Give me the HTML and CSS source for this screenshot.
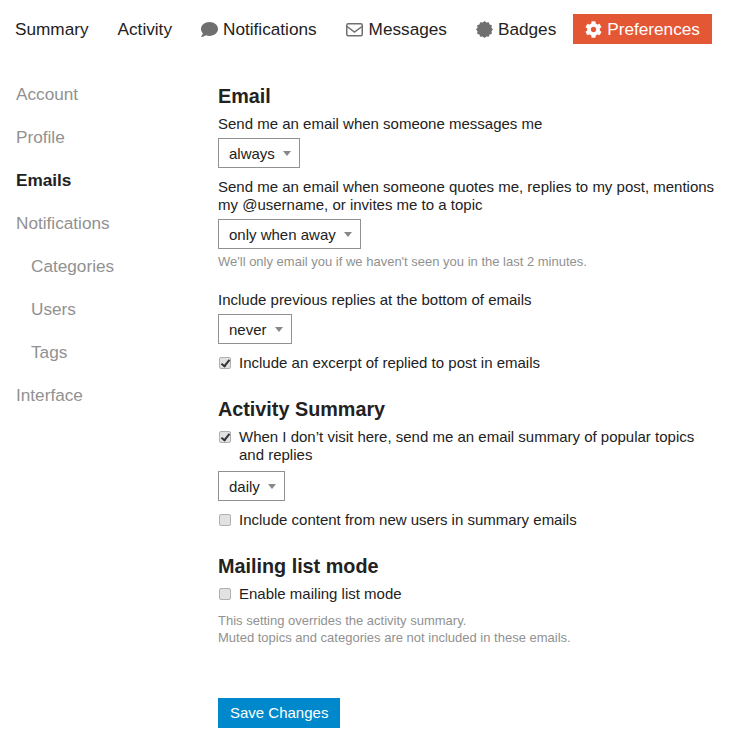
FILE: index.html
```html
<!DOCTYPE html>
<html lang="en">
<head>
    <meta charset="UTF-8">
    <title>Preferences</title>
    <link rel="stylesheet" href="styles.css">
</head>
<body>
    <nav class="top-nav">
        <a class="tab">Summary</a>
        <a class="tab">Activity</a>
        <a class="tab">
            <svg class="icon" viewBox="0 0 512 512"><path d="M256 32C114.6 32 0 125.1 0 240c0 49.6 21.4 95 57 130.7C44.5 421.1 2.7 466 2.2 466.5c-2.2 2.3-2.8 5.7-1.5 8.7S4.8 480 8 480c66.3 0 116-31.8 140.6-51.4 32.7 12.3 69 19.4 107.4 19.4 141.4 0 256-93.1 256-208S397.4 32 256 32z"/></svg>
            Notifications</a>
        <a class="tab">
            <svg class="icon outline" viewBox="0 0 17 17"><rect x="0.75" y="2.75" width="15.5" height="12" rx="1.5"/><polyline points="1,5.5 8.5,11 16,5.5"/></svg>
            Messages</a>
        <a class="tab">
            <svg class="icon" viewBox="0 0 16 16"><polygon points="16,8 14.57,9.76 14.93,12 12.81,12.81 12,14.93 9.76,14.57 8,16 6.24,14.57 4,14.93 3.19,12.81 1.07,12 1.43,9.76 0,8 1.43,6.24 1.07,4 3.19,3.19 4,1.07 6.24,1.43 8,0 9.76,1.43 12,1.07 12.81,3.19 14.93,4 14.57,6.24"/></svg>
            Badges</a>
        <a class="tab active">
            <svg class="icon" viewBox="0 0 512 512"><path d="M487.4 315.7l-42.6-24.6c4.3-23.2 4.3-47 0-70.2l42.6-24.6c4.9-2.8 7.1-8.6 5.5-14-11.1-35.6-30-67.8-54.7-94.6-3.8-4.1-10-5.1-14.8-2.3L380.8 110c-17.9-15.4-38.5-27.3-60.8-35.1V25.8c0-5.6-3.9-10.5-9.4-11.7-36.7-8.2-74.3-7.8-109.2 0-5.5 1.2-9.4 6.1-9.4 11.7V75c-22.2 7.9-42.8 19.8-60.8 35.1L88.7 85.5c-4.9-2.8-11-1.9-14.8 2.3-24.7 26.7-43.6 58.9-54.7 94.6-1.7 5.4.6 11.2 5.5 14L67.3 221c-4.3 23.2-4.3 47 0 70.2l-42.6 24.6c-4.9 2.8-7.1 8.6-5.5 14 11.1 35.6 30 67.8 54.7 94.6 3.8 4.1 10 5.1 14.8 2.3l42.6-24.6c17.9 15.4 38.5 27.3 60.8 35.1v49.2c0 5.6 3.9 10.5 9.4 11.7 36.7 8.2 74.3 7.8 109.2 0 5.5-1.2 9.4-6.1 9.4-11.7v-49.2c22.2-7.9 42.8-19.8 60.8-35.1l42.6 24.6c4.9 2.8 11 1.9 14.8-2.3 24.7-26.7 43.6-58.9 54.7-94.6 1.5-5.5-.7-11.3-5.6-14.1zM256 336c-44.1 0-80-35.9-80-80s35.9-80 80-80 80 35.9 80 80-35.9 80-80 80z"/></svg>
            Preferences</a>
    </nav>

    <div class="page">
        <ul class="side-nav">
            <li>Account</li>
            <li>Profile</li>
            <li class="current">Emails</li>
            <li>Notifications</li>
            <li class="sub">Categories</li>
            <li class="sub">Users</li>
            <li class="sub">Tags</li>
            <li>Interface</li>
        </ul>

        <form class="prefs">
            <h3>Email</h3>
            <p class="line">Send me an email when someone messages me</p>
            <div class="select">always<span class="caret"></span></div>
            <p class="line quote-line">Send me an email when someone quotes me, replies to my post, mentions my @username, or invites me to a topic</p>
            <div class="select">only when away<span class="caret"></span></div>
            <p class="hint away-hint">We'll only email you if we haven't seen you in the last 2 minutes.</p>
            <p class="line previous-line">Include previous replies at the bottom of emails</p>
            <div class="select">never<span class="caret"></span></div>
            <label class="check first-check"><input type="checkbox" checked>Include an excerpt of replied to post in emails</label>

            <h3 class="section">Activity Summary</h3>
            <label class="check"><input type="checkbox" checked>When I don’t visit here, send me an email summary of popular topics and replies</label>
            <div class="select daily">daily<span class="caret"></span></div>
            <label class="check first-check"><input type="checkbox">Include content from new users in summary emails</label>

            <h3 class="section">Mailing list mode</h3>
            <label class="check"><input type="checkbox">Enable mailing list mode</label>
            <p class="hint mailing-hint">This setting overrides the activity summary.<br>Muted topics and categories are not included in these emails.</p>

            <button class="save" type="button">Save Changes</button>
        </form>
    </div>
</body>
</html>
```

FILE: styles.css
```css
body {
    margin: 0;
    font-family: "Liberation Sans", Arial, sans-serif;
    font-size: 15px;
    line-height: 18px;
    color: #222;
    background-color: #fff;
}
.top-nav {
    display: flex;
    gap: 5px;
    padding: 14px 0 0 3px;
}
.tab {
    display: flex;
    align-items: center;
    gap: 5px;
    height: 30px;
    padding: 0 12px;
    box-sizing: border-box;
    font-size: 17.2px;
}
.tab .icon {
    width: 17px;
    height: 17px;
    fill: #6f6f6f;
}
.tab .icon.outline {
    margin-right: 1px;
    fill: none;
    stroke: #6f6f6f;
    stroke-width: 1.5;
}
.tab.active {
    background-color: #e45735;
    color: #fff;
}
.tab.active .icon {
    fill: #fff;
}
.page {
    display: flex;
    padding: 27px 15px 0 16px;
}
.side-nav {
    width: 202px;
    flex: none;
    margin: 0;
    padding: 0;
    list-style: none;
    font-size: 17.2px;
    color: #919191;
}
.side-nav li {
    height: 43px;
    line-height: 18px;
    padding-top: 14px;
    box-sizing: border-box;
}
.side-nav .sub {
    padding-left: 15px;
}
.side-nav .current {
    font-weight: bold;
    color: #222;
}
.prefs {
    flex: 1;
    padding-top: 13px;
}
h3 {
    margin: 0 0 7px 0;
    font-size: 19.8px;
    line-height: 24px;
}
.section {
    margin-top: 25px;
}
.line {
    margin: 0 0 5px 0;
}
.quote-line {
    margin-top: 10px;
    margin-right: -2px;
}
.previous-line {
    margin-top: 21px;
}
.select {
    display: inline-flex;
    align-items: center;
    height: 30px;
    box-sizing: border-box;
    padding: 1px 8px 0 10px;
    border: 1px solid #919191;
}
.caret {
    margin-left: 8px;
    border-style: solid;
    border-width: 5px 4.5px 0 4.5px;
    border-color: #888 transparent transparent transparent;
}
.hint {
    margin: 0;
    font-size: 13px;
    line-height: 17px;
    color: #919191;
}
.away-hint {
    margin-top: 4px;
}
.mailing-hint {
    margin-top: 9px;
}
.check {
    display: block;
    position: relative;
    padding-left: 21px;
}
.first-check {
    margin-top: 10px;
}
.check input {
    appearance: none;
    position: absolute;
    left: 1px;
    top: 3px;
    width: 12px;
    height: 12px;
    margin: 0;
    border: 1px solid #b0b0b0;
    border-radius: 2px;
    background-color: #e2e2e2;
}
.check input:checked::after {
    content: "";
    position: absolute;
    left: 3px;
    top: 0;
    width: 3px;
    height: 7px;
    border: solid #333;
    border-width: 0 2px 2px 0;
    transform: rotate(38deg);
}
.daily {
    margin-top: 7px;
}
.save {
    display: block;
    margin-top: 52px;
    height: 30px;
    padding: 0 12px 1px 12px;
    border: none;
    font-family: inherit;
    font-size: 15px;
    color: #fff;
    background-color: #0088cc;
}
```
